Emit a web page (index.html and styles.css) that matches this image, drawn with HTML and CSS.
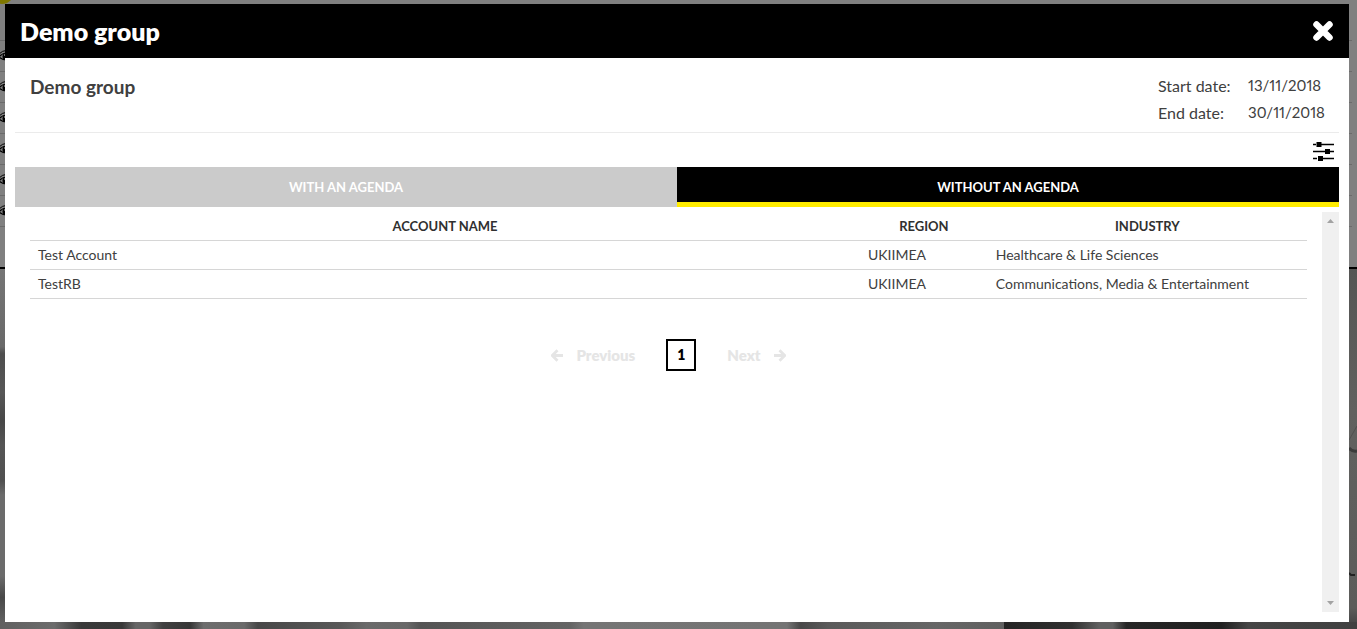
FILE: index.html
```html
<!DOCTYPE html>
<html lang="en">
<head>
<meta charset="utf-8">
<title>Demo group</title>
<meta name="viewport" content="width=device-width, initial-scale=1">
<link rel="stylesheet" href="styles.css">
</head>
<body>
<svg class="sprite" aria-hidden="true">
  <symbol id="eye" viewBox="0 0 16 14">
    <path d="M1 8Q8 0 15 8Q8 14 1 8Z" fill="none" stroke="#000" stroke-width="1.2"/>
    <path d="M1 5Q8-2 15 5" fill="none" stroke="#000" stroke-width="1"/>
    <circle cx="8" cy="7.500" r="3.500" fill="#000"/>
    <circle cx="7" cy="6" r="1" fill="#888"/>
  </symbol>
  <symbol id="arrow" viewBox="0 0 13 13">
    <path d="M1 6.500H11.500M6.500 1.300L11.700 6.500L6.500 11.700" fill="none" stroke="currentColor" stroke-width="2.800"/>
  </symbol>
</svg>

<div class="page" aria-hidden="true">
  <div class="page-top"><span class="badge"></span></div>
  <div class="page-rows">
    <div class="page-row"><svg class="eye"><use href="#eye"/></svg></div>
    <div class="page-row"><svg class="eye"><use href="#eye"/></svg></div>
    <div class="page-row"><svg class="eye"><use href="#eye"/></svg></div>
    <div class="page-row"><svg class="eye"><use href="#eye"/></svg></div>
    <div class="page-row"><svg class="eye"><use href="#eye"/></svg></div>
    <div class="page-row"><svg class="eye"><use href="#eye"/></svg></div>
  </div>
  <div class="photo">
    <div class="photo-left"></div>
    <svg class="photo-right" viewBox="0 0 8 353" preserveAspectRatio="none">
      <path d="M8 157L0 171" stroke="#50504f" fill="none"/>
      <path d="M0 179Q3 183 8 182" stroke="#3c3c3b" stroke-width="3" fill="none"/>
      <path d="M0 304L2 306H6" stroke="#222" stroke-width="2" fill="none"/>
    </svg>
    <div class="photo-bottom"></div>
  </div>
</div>

<div class="overlay">
<section class="modal" role="dialog" aria-labelledby="dialog-title">
  <header class="modal-head">
    <h1 class="modal-title" id="dialog-title">Demo group</h1>
    <button class="icon-button" type="button" aria-label="Close">
      <svg width="20" height="20" viewBox="0 0 20 20"><path d="M3.500 3.500L16.500 16.500M16.500 3.500L3.500 16.500" stroke="#fff" stroke-width="6.500" stroke-linecap="round"/></svg>
    </button>
  </header>
  <div class="modal-body">
    <div class="info">
      <h2 class="info-title">Demo group</h2>
      <dl class="dates">
        <dt>Start date:</dt><dd>13/11/2018</dd>
        <dt>End date:</dt><dd>30/11/2018</dd>
      </dl>
    </div>
    <div class="tools">
      <button class="icon-button" type="button" aria-label="Filter">
        <svg width="22" height="20" viewBox="0 0 22 20"><path d="M1 3.500H4M9 3.500H22M1 10.500H13M18 10.500H22M1 17.500H5M11 17.500H22" stroke="#000" stroke-width="1.500"/><path d="M4.500 1H9.500V6H4.500ZM13 8H18V13H13ZM6 15H11V20H6Z"/></svg>
      </button>
    </div>
    <div class="tabs" role="tablist">
      <button class="tab" type="button" role="tab" aria-selected="false">WITH AN AGENDA</button>
      <button class="tab tab-active" type="button" role="tab" aria-selected="true">WITHOUT AN AGENDA</button>
    </div>
    <div class="scroller">
      <div class="content">
        <table class="accounts">
          <colgroup><col class="col-name"><col class="col-region"><col class="col-industry"></colgroup>
          <thead><tr><th>ACCOUNT NAME</th><th>REGION</th><th>INDUSTRY</th></tr></thead>
          <tbody>
            <tr><td>Test Account</td><td>UKIIMEA</td><td>Healthcare &amp; Life Sciences</td></tr>
            <tr><td>TestRB</td><td>UKIIMEA</td><td>Communications, Media &amp; Entertainment</td></tr>
          </tbody>
        </table>
        <nav class="pager" aria-label="Pages">
          <button class="pager-step" type="button" disabled><svg class="arrow arrow-back"><use href="#arrow"/></svg>Previous</button>
          <button class="pager-page" type="button" aria-current="page">1</button>
          <button class="pager-step" type="button" disabled>Next<svg class="arrow"><use href="#arrow"/></svg></button>
        </nav>
      </div>
      <div class="scrollbar" aria-hidden="true">
        <svg width="17" height="17" viewBox="0 0 17 17"><path d="M5 11L8.500 7L12 11Z" fill="#a3a3a3"/></svg>
        <svg width="17" height="17" viewBox="0 0 17 17"><path d="M5 6L8.500 10L12 6Z" fill="#a3a3a3"/></svg>
      </div>
    </div>
  </div>
</section>
</div>
</body>
</html>
```

FILE: styles.css
```css
* { box-sizing: border-box; }
body {
  margin: 0;
  height: 100vh;
  overflow: hidden;
  color: #404040;
  font: 14px/20px Lato, "Open Sans", sans-serif;
}
button { padding: 0; border: 0; background: none; font: inherit; color: inherit; }
h1, h2, dl, dd { margin: 0; }
.sprite { position: absolute; width: 0; height: 0; }

.page {
  position: fixed;
  inset: 0;
  display: flex;
  flex-direction: column;
  background: #808080;
}
.page-top { flex: none; height: 40px; overflow: hidden; }
.badge {
  display: block;
  width: 24px;
  height: 24px;
  margin: -20px 0 0 -10px;
  border-radius: 50%;
  background: #807800;
}
.page-rows { flex: none; height: 227px; margin-right: 5px; }
.page-row { height: 31px; border-top: 1px solid #6b6b6b; padding-top: 8px; }
.page-row:last-child { height: 32px; border-bottom: 1px solid #6b6b6b; }
.eye { display: block; width: 16px; height: 14px; margin-left: -2px; }
.photo {
  flex: 1;
  display: grid;
  grid-template: minmax(0, 1fr) 7px / 5px 1fr 8px;
  border-top: 2px solid #000;
  background: #5d5d5c;
}
.photo-left {
  background: linear-gradient(#757575, #696969 22%, #4e4e4e 24%, #575757 35%, #474747 43%, #555 50%, #505050 60%, #6b6b6b 64%, #6b6b6b 87%, #484848 93%, #606060);
}
.photo-right {
  grid-column: 3;
  width: 100%;
  height: 100%;
  background: linear-gradient(#555554, #61615f 40%, #5c5c5a 96%, #484848);
}
.photo-bottom {
  grid-column: 1 / -1;
  background: linear-gradient(90deg, #606060, #6c6c6c 4%, #393939 6%, #383838 9%, #666 10%, #666 11%, #404040 12%, #363636 14%, #6d6d6d 15%, #6a6a6a 18%, #484848 19%, #585858 25%, #6a6a6a 27%, #686868 30%, #545454 31%, #646464 42%, #757575 43%, #747474 58%, #484848 59%, #5a5a5a 61%, #666 69%, #606060 74%, #242424 74%, #303030 79%, #606060 81%, #606060 82%, #262626 83%, #202020 90%, #454545 92%, #404040);
}

.overlay { position: fixed; inset: 0; display: flex; padding: 4px 8px 7px 5px; }
.modal { flex: 1; display: flex; flex-direction: column; background: #fff; }
.modal-head {
  display: flex;
  align-items: center;
  justify-content: space-between;
  height: 54px;
  padding: 0 16px 0 15px;
  background: #000;
  color: #fff;
}
.modal-title { font-size: 25px; line-height: 32px; font-weight: 800; }
.icon-button { display: flex; }
.modal-body { flex: 1; display: flex; flex-direction: column; padding: 0 10px 10px; }

.info {
  display: flex;
  justify-content: space-between;
  padding: 14px 15px 6px;
  border-bottom: 1px solid #ebebeb;
}
.info-title { font-size: 19px; line-height: 30px; font-weight: 700; }
.dates {
  display: grid;
  grid-template-columns: 90px 76px;
  font-size: 16px;
  line-height: 27px;
}
.dates dd { font-size: 15px; font-variant-numeric: proportional-nums; }
.tools { display: flex; justify-content: flex-end; padding: 8px 5px 6px; }

.tabs { display: grid; grid-template-columns: 1fr 1fr; height: 40px; }
.tab { background: #cbcbcb; color: #fff; font-size: 13px; font-weight: 700; }
.tab-active { background: #000; border-bottom: 5px solid #ffec00; padding-top: 5px; }

.scroller { flex: 1; display: flex; margin-top: 5px; }
.content { flex: 1; padding: 0 15px; }
.accounts { width: 100%; table-layout: fixed; border-collapse: separate; border-spacing: 0; }
.col-name { width: 65%; }
.col-region { width: 10%; }
.col-industry { width: 25%; }
.accounts th, .accounts td { height: 29px; padding: 0 8px; border-bottom: 1px solid #d6d6d6; text-align: left; }
.accounts th { text-align: center; font-size: 13px; font-weight: 700; color: #303030; }

.pager { display: flex; justify-content: center; align-items: center; gap: 31px; margin-top: 40px; font-size: 15px; font-weight: 800; }
.pager-step { display: flex; align-items: center; gap: 12px; color: #e5e5e5; }
.pager-page { width: 30px; height: 32px; border: 2px solid #000; color: #000; font-size: 14px; }
.arrow { width: 13px; height: 13px; }
.arrow-back { transform: scaleX(-1); }

.scrollbar { display: flex; flex-direction: column; justify-content: space-between; width: 17px; background: #f0f0f0; }
```
